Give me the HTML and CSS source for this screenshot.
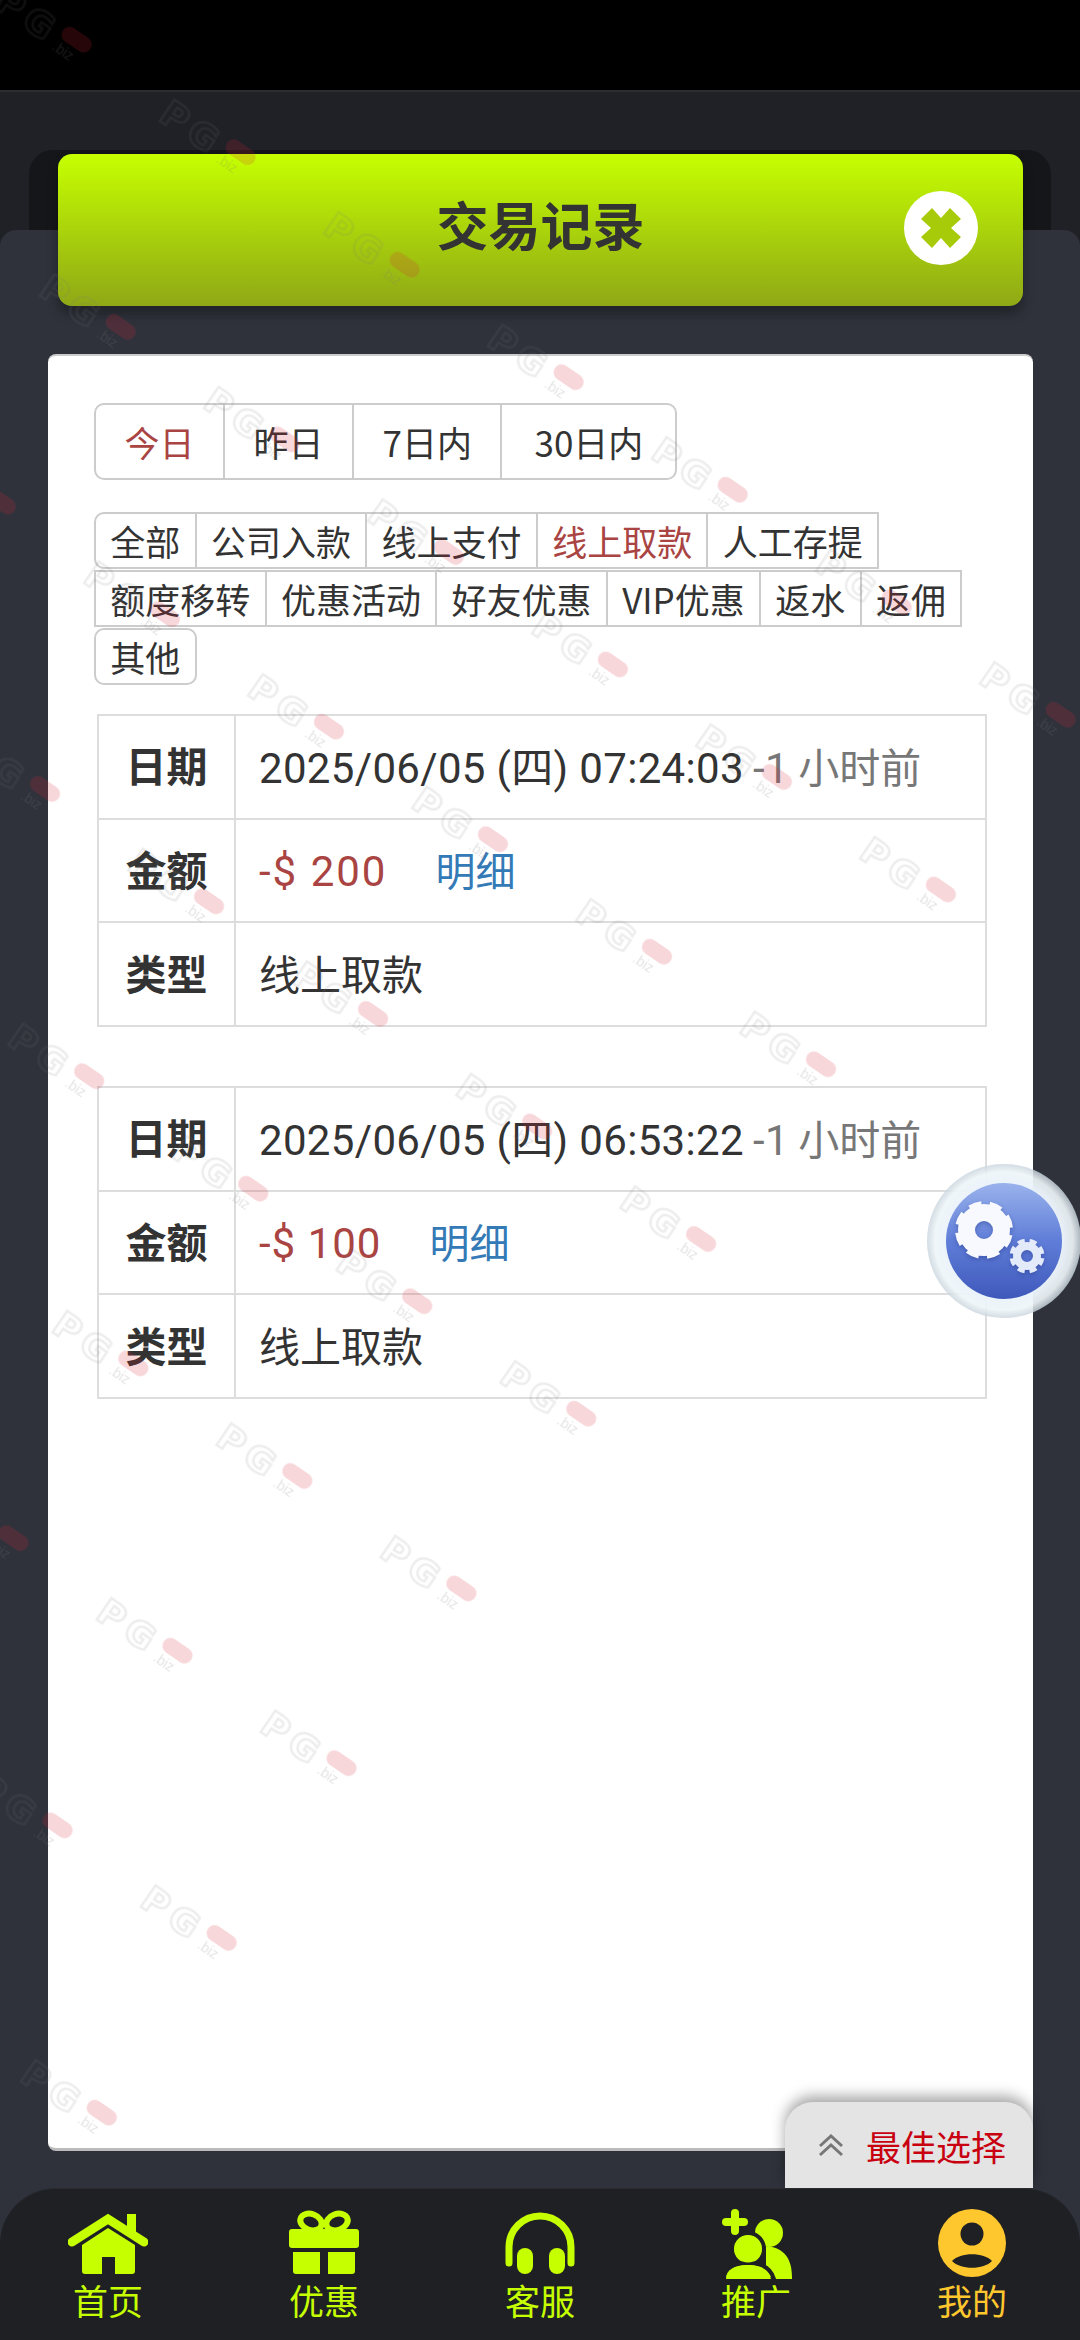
FILE: index.html
```html
<!DOCTYPE html>
<html lang="zh-CN">
<head>
<meta charset="utf-8">
<title>交易记录</title>
<link rel="stylesheet" href="styles.css">
</head>
<body>
<div class="app">
  <div class="status"></div>
  <main class="main">
    <div class="backplate"></div>
    <section class="panel">
      <header class="head">
        <h1 class="title">交易记录</h1>
        <button class="close" aria-label="关闭">
          <svg viewBox="0 0 74 74" width="74" height="74"><circle cx="37" cy="37" r="37" fill="#fff"/><path d="M37 27 L46 17 L57 28 L47 37 L57 46 L46 57 L37 47 L28 57 L17 46 L27 37 L17 28 L28 17 Z" fill="#a7cb08"/></svg>
        </button>
      </header>
      <div class="card">
        <div class="tabs">
          <span class="tab on">今日</span><span class="tab">昨日</span><span class="tab">7日内</span><span class="tab wide">30日内</span>
        </div>
        <div class="filters">
          <span class="chip tl">全部</span><span class="chip">公司入款</span><span class="chip">线上支付</span><span class="chip on">线上取款</span><span class="chip">人工存提</span>
          <span class="chip">额度移转</span><span class="chip">优惠活动</span><span class="chip">好友优惠</span><span class="chip">VIP优惠</span><span class="chip">返水</span><span class="chip">返佣</span>
          <span class="chip solo">其他</span>
        </div>
        <table class="rec first">
          <tr><th>日期</th><td><span class="num">2025/06/05 (四) 07:24:03</span> <span class="ago"><span class="num">-1</span> 小时前</span></td></tr>
          <tr><th>金额</th><td><span class="amt wide"><span class="num">-$ 200</span></span><a class="more">明细</a></td></tr>
          <tr><th>类型</th><td>线上取款</td></tr>
        </table>
        <table class="rec">
          <tr><th>日期</th><td><span class="num">2025/06/05 (四) 06:53:22</span> <span class="ago"><span class="num">-1</span> 小时前</span></td></tr>
          <tr><th>金额</th><td><span class="amt"><span class="num">-$ 100</span></span><a class="more">明细</a></td></tr>
          <tr><th>类型</th><td>线上取款</td></tr>
        </table>
        <div class="best">
          <svg viewBox="0 0 26 23" width="26" height="23"><path d="M2 12 L13 2 L24 12 M2 21 L13 11 L24 21" fill="none" stroke="#777" stroke-width="3"/></svg>
          <span>最佳选择</span>
        </div>
      </div>
    </section>
  </main>
  <nav class="nav">
    <a class="item">
      <svg viewBox="0 0 80 70" width="80" height="70"><path d="M59 5 H68 V24 H59 Z" fill="#c6ff00"/><path d="M4 33 L40 10 L76 33" fill="none" stroke="#c6ff00" stroke-width="9" stroke-linecap="round"/><path d="M14 36 L40 19 L67 36 V62 Q67 65 64 65 H47 V48 H34 V65 H17 Q14 65 14 62 Z" fill="#c6ff00"/></svg>
      <span>首页</span>
    </a>
    <a class="item">
      <svg viewBox="0 0 80 70" width="80" height="70"><ellipse cx="27" cy="13" rx="11" ry="8" fill="none" stroke="#c6ff00" stroke-width="6" transform="rotate(20 27 13)"/><ellipse cx="53" cy="13" rx="11" ry="8" fill="none" stroke="#c6ff00" stroke-width="6" transform="rotate(-20 53 13)"/><rect x="5" y="20" width="70" height="19" rx="3" fill="#c6ff00"/><path d="M9 43 H36 V65 H12 Q9 65 9 62 Z M44 43 H71 V62 Q71 65 68 65 H44 Z" fill="#c6ff00"/></svg>
      <span>优惠</span>
    </a>
    <a class="item">
      <svg viewBox="0 0 80 70" width="80" height="70"><path d="M9 54 V38 A31 31 0 0 1 71 38 V54" fill="none" stroke="#c6ff00" stroke-width="7" stroke-linecap="round"/><rect x="17" y="39" width="16" height="26" rx="8" fill="#c6ff00"/><rect x="49" y="39" width="16" height="26" rx="8" fill="#c6ff00"/></svg>
      <span>客服</span>
    </a>
    <a class="item">
      <svg viewBox="0 0 80 70" width="80" height="70"><path d="M15 4 Q15 0 19 0 Q23 0 23 4 V9 H28 Q32 9 32 13 Q32 17 28 17 H23 V22 Q23 26 19 26 Q15 26 15 22 V17 H10 Q6 17 6 13 Q6 9 10 9 H15 Z" fill="#c6ff00"/><circle cx="53" cy="24" r="14" fill="#c6ff00"/><path d="M56 38 C72 42 76 54 76 70 H50 L50 38 Z" fill="#c6ff00"/><circle cx="32" cy="40" r="16" fill="#c6ff00" stroke="#1e2024" stroke-width="4"/><path d="M8 70 C8 60 18 54 32 54 C46 54 55 60 58 70 Z" fill="#c6ff00" stroke="#1e2024" stroke-width="4"/><path d="M10 70 C10 61 18 56 32 56 C44 56 53 61 55 70 Z" fill="#c6ff00"/><circle cx="32" cy="40" r="13.5" fill="#c6ff00"/></svg>
      <span>推广</span>
    </a>
    <a class="item mine">
      <svg viewBox="0 0 80 70" width="80" height="70"><circle cx="40" cy="34" r="34" fill="#ffc72e"/><circle cx="40" cy="25" r="11.5" fill="#1e2024"/><path d="M20 52 C28 43 52 43 60 52 C52 61 28 61 20 52 Z" fill="#1e2024"/></svg>
      <span>我的</span>
    </a>
  </nav>
</div>
<div class="gear-btn">
  <svg viewBox="0 0 156 156" width="156" height="156">
    <defs>
      <linearGradient id="blue" x1="0" y1="0" x2="0" y2="1"><stop offset="0" stop-color="#9ab2ec"/><stop offset=".5" stop-color="#5f7dd8"/><stop offset="1" stop-color="#3f59bb"/></linearGradient>
      <radialGradient id="ring"><stop offset=".72" stop-color="#eaf2fb"/><stop offset=".9" stop-color="#eef5f8" stop-opacity=".92"/><stop offset="1" stop-color="#c9d5dd" stop-opacity=".8"/></radialGradient>
    </defs>
    <circle cx="78" cy="78" r="77" fill="url(#ring)"/>
    <circle cx="78" cy="78" r="58" fill="url(#blue)"/>
    <g class="gear" fill="none" stroke="#f7f9fe" transform="translate(58 67)">
      <circle r="17.5" stroke-width="17"/>
      <circle r="25.5" stroke-width="7" stroke-dasharray="12 8" transform="rotate(11)"/>
    </g>
    <g class="gear" fill="none" stroke="#e3eafa" transform="translate(101 93)">
      <circle r="10" stroke-width="8"/>
      <circle r="15" stroke-width="5" stroke-dasharray="7 4.78" transform="rotate(8)"/>
    </g>
  </svg>
</div>
<svg class="wm" width="1080" height="2340" aria-hidden="true">
  <defs>
    <pattern id="pg" x="-150" y="-40" width="198.9" height="211.9" patternUnits="userSpaceOnUse">
      <g transform="translate(150 40)">
        <text class="wm-pg" x="-88" y="20">PG</text>
        <text class="wm-biz" x="-16" y="22">.biz</text>
        <rect class="wm-pill" x="-17" y="-8" width="33" height="16" rx="8"/>
      </g>
    </pattern>
  </defs>
  <g transform="translate(77 40) rotate(34.45)">
    <rect x="-500" y="-40" width="1742" height="3040" fill="url(#pg)"/>
  </g>
</svg>
</body>
</html>
```
FILE: styles.css
```css
* { box-sizing: border-box; }
html, body { margin: 0; padding: 0; }
body {
  position: relative;
  width: 1080px;
  height: 2340px;
  overflow: hidden;
  background: #1f2126;
  font-family: "Noto Sans CJK SC", "Noto Sans", sans-serif;
  color: #333;
}
.app { display: flex; flex-direction: column; height: 2340px; }
.status { height: 90px; background: #000; flex: none; }
.main {
  flex: 1;
  min-height: 0;
  display: flex;
  flex-direction: column;
  padding-top: 58px;
  border-top: 2px solid #2c2d30;
}
.backplate {
  flex: none;
  height: 80px;
  margin: 0 29px;
  background: #14161a;
  border-radius: 24px 24px 0 0;
}
.panel {
  flex: 1;
  min-height: 0;
  display: flex;
  flex-direction: column;
  padding: 0 47px 97px 48px;
  background: #2f323b;
  border-radius: 16px 16px 0 0;
}
.head {
  flex: none;
  position: relative;
  display: flex;
  align-items: center;
  justify-content: center;
  height: 152px;
  margin: -76px 10px 48px 10px;
  padding-bottom: 12px;
  background: linear-gradient(#c6ff00, #8fa816);
  border-radius: 14px;
  box-shadow: 0 8px 12px rgba(0, 0, 0, .3);
}
.title { margin: 0; font-size: 52px; font-weight: 700; line-height: 1; color: #333; }
.close {
  position: absolute;
  right: 45px;
  top: 37px;
  width: 74px;
  height: 74px;
  padding: 0;
  border: 0;
  background: none;
}
.close svg { display: block; }
.card {
  flex: 1;
  position: relative;
  padding: 47px 46px 0;
  background: #fff;
  border-radius: 8px;
  border-top: 2px solid #ccc;
  border-bottom: 3px solid #bbb;
}
.tabs {
  display: flex;
  width: fit-content;
  height: 77px;
  border: 2px solid #ccc;
  border-radius: 10px;
}
.tab {
  display: flex;
  align-items: center;
  padding: 0 28.5px;
  font-size: 35px;
  border-left: 2px solid #ccc;
}
.tab:first-child { border-left: 0; }
.tab.wide { padding: 0 32px; }
.tab.on, .chip.on { color: #a94442; }
.filters {
  display: flex;
  flex-wrap: wrap;
  row-gap: 1px;
  margin-top: 32px;
}
.chip {
  display: flex;
  align-items: center;
  height: 57px;
  padding: 0 14.3px;
  margin-right: -2px;
  font-size: 35px;
  border: 2px solid #ccc;
}
.chip.tl { border-radius: 10px 0 0 10px; }
.chip.solo { border-radius: 10px; }
.rec {
  width: 890px;
  margin: 59px 0 0 3px;
  border-collapse: collapse;
  font-size: 41px;
}
.rec.first { margin-top: 29px; }
.rec th, .rec td { height: 103.7px; padding: 0 0 5px; border: 2px solid #ddd; }
.rec th { width: 137px; font-weight: 700; text-align: center; }
.rec td { padding-left: 23px; white-space: nowrap; }
.num { font-family: Roboto, "Noto Sans CJK SC", sans-serif; font-size: 42px; letter-spacing: .33px; }
.ago { color: #777; }
.amt { color: #a94442; }
.amt .num { letter-spacing: 1px; }
.amt.wide .num { letter-spacing: 2px; }
.more { margin-left: 48px; font-size: 40px; color: #337ab7; }
.best {
  position: absolute;
  right: 0;
  bottom: -40px;
  display: flex;
  align-items: center;
  gap: 22px;
  width: 248px;
  height: 86px;
  padding: 0 0 0 33px;
  font-size: 35px;
  color: #c8000f;
  background: #e4e4e4;
  border-radius: 28px 28px 0 0;
  box-shadow: 0 -6px 14px rgba(0, 0, 0, .35);
}
.nav {
  flex: none;
  position: relative;
  display: grid;
  grid-template-columns: repeat(5, 216px);
  height: 152px;
  margin-top: -60px;
  padding-top: 20px;
  background: #1e2024;
  border-radius: 56px 56px 0 0;
  border-top: 1px solid #292b31;
}
.item {
  display: flex;
  flex-direction: column;
  align-items: center;
  font-size: 35px;
  line-height: 42px;
  color: #c6ff00;
}
.item svg { display: block; }
.item.mine { color: #ffc72e; }
.gear-btn {
  position: absolute;
  left: 926px;
  top: 1163px;
  width: 156px;
  height: 156px;
}
.gear-btn svg { display: block; }
.gear { filter: drop-shadow(0 2px 2px rgba(40, 60, 140, .45)); }
.wm { position: absolute; left: 0; top: 0; pointer-events: none; }
.wm-pg { font-family: "DejaVu Sans", sans-serif; font-size: 36px; font-weight: 700; letter-spacing: 6px; fill: none; stroke: #777; stroke-width: 2.5; opacity: .13; }
.wm-biz { font-family: "Liberation Sans", sans-serif; font-size: 14px; fill: #777; opacity: .2; }
.wm-pill { fill: #d9213a; opacity: .18; }
```
